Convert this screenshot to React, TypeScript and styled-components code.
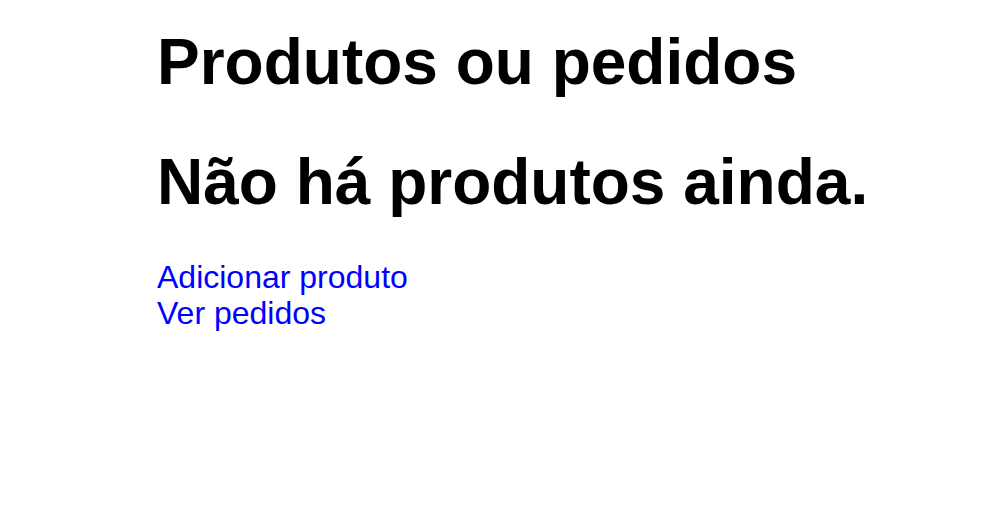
import React from "react";
import styled, { createGlobalStyle } from "styled-components";

const GlobalStyle = createGlobalStyle`
  body {
    margin: 0;
    background: #ffffff;
    font-family: "Liberation Sans", Arial, Helvetica, sans-serif;
  }
`;

const Page = styled.main`
  display: flex;
  flex-direction: column;
  padding: 0 0 0 157px;
`;

const Title = styled.h1`
  margin: 25px 0 0;
  font-size: 64px;
  font-weight: 700;
  line-height: 74px;
  color: #000;
`;

const Empty = styled.h2`
  margin: 46px 0 0;
  font-size: 64px;
  font-weight: 700;
  line-height: 74px;
  color: #000;
`;

const Links = styled.nav`
  display: flex;
  flex-direction: column;
  margin-top: 40px;
`;

const NavLink = styled.a`
  font-size: 32px;
  line-height: 36px;
  color: #0000ff;
  text-decoration: none;
  align-self: flex-start;
`;

export default function App() {
  return (
    <>
      <GlobalStyle />
      <Page>
        <Title>Produtos ou pedidos</Title>
        <Empty>Não há produtos ainda.</Empty>
        <Links>
          <NavLink href="#">Adicionar produto</NavLink>
          <NavLink href="#">Ver pedidos</NavLink>
        </Links>
      </Page>
    </>
  );
}
